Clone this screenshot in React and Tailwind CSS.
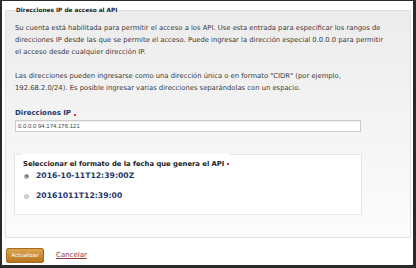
export default function App() {
  const sans = { fontFamily: '"DejaVu Sans", Verdana, sans-serif' };

  return (
    <div className="w-[416px] h-[268px] bg-white border-l-2 border-t border-r-[3px] border-b-[3px] border-[#2a2a2a] box-border overflow-hidden" style={sans}>
      <fieldset className="ml-[3px] mt-[4px] w-[406px] border border-[#e1e1e1] bg-gradient-to-b from-[#ececec] to-[#fcfcfc] pl-[9px] pr-[8px] pt-[7px] pb-[22px]">
        <legend className="ml-[1px] text-[5.8px] leading-[10px] font-bold text-[#222]">
          Direcciones IP de acceso al API
        </legend>

        <p className="text-[6.8px] leading-[12px] text-[#3a3a3a] whitespace-nowrap">
          Su cuenta está habilitada para permitir el acceso a los API. Use esta entrada para especificar los rangos de
          <br />
          direcciones IP desde las que se permite el acceso. Puede ingresar la dirección especial 0.0.0.0 para permitir
          <br />
          el acceso desde cualquier dirección IP.
        </p>
        <p className="mt-[12px] text-[6.8px] leading-[12px] text-[#3a3a3a] whitespace-nowrap">
          Las direcciones pueden ingresarse como una dirección única o en formato "CIDR" (por ejemplo,
          <br />
          192.68.2.0/24). Es posible ingresar varias direcciones separándolas con un espacio.
        </p>

        <div className="mt-[14px] flex items-center text-[7px] leading-[10px] font-bold text-[#1d3868]">
          Direcciones IP
          <span className="ml-[3px] mt-[3px] inline-block w-[2px] h-[2px] bg-[#e0302a]" />
        </div>
        <div className="mt-[2px] w-[346px] h-[12px] border border-[#cdcdcd] bg-white shadow-[inset_0_1px_1px_rgba(0,0,0,0.08)] flex items-center px-[2px]">
          <span className="text-[6px] text-[#444]" style={{ fontFamily: '"Liberation Sans", Arial, sans-serif' }}>
            0.0.0.0 94.174.176.121
          </span>
        </div>

        <fieldset className="mt-[7px] -ml-px w-[348px] border border-[#e6e6e6] bg-white pl-[9px] pb-[13px]">
          <legend className="pt-[20px] px-[1px] -ml-[2px] text-[6.8px] leading-[10px] font-bold text-[#222] flex items-center">
            Seleccionar el formato de la fecha que genera el API
            <span className="ml-[3px] inline-block w-[2px] h-[2px] bg-[#e0302a]" />
          </legend>
          <label className="mt-[2px] flex items-center h-[10px]">
            <span className="w-[5px] h-[5px] rounded-full bg-[#b8b8b8] border border-[#9a9a9a] flex items-center justify-center">
              <span className="w-[2px] h-[2px] rounded-full bg-[#555]" />
            </span>
            <span className="ml-[7px] text-[7.7px] font-bold text-[#1d3868]">2016-10-11T12:39:00Z</span>
          </label>
          <label className="mt-[10px] flex items-center h-[10px]">
            <span className="w-[5px] h-[5px] rounded-full bg-[#d6d6d6] border border-[#bdbdbd]" />
            <span className="ml-[7px] text-[7.7px] font-bold text-[#1d3868]">20161011T12:39:00</span>
          </label>
        </fieldset>
      </fieldset>

      <div className="ml-[4px] mt-[10px] flex items-center">
        <button className="w-[38px] h-[15px] rounded-[2px] border border-[#a66c1c] bg-gradient-to-b from-[#dca452] to-[#b7761e] text-white text-[5.5px] leading-none">
          Actualizar
        </button>
        <a href="#" className="ml-[12px] text-[7px] text-[#8b3a3a] underline">
          Cancelar
        </a>
      </div>
    </div>
  );
}
